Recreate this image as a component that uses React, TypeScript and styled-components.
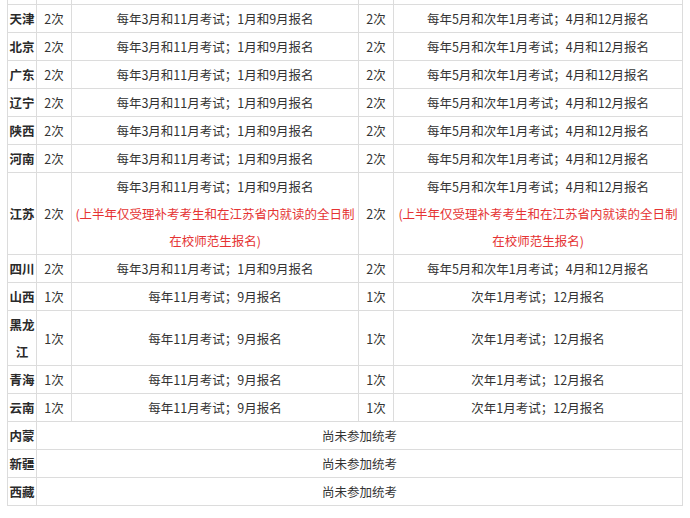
import styled, { createGlobalStyle } from "styled-components";

const GlobalStyle = createGlobalStyle`
  html, body {
    margin: 0;
    padding: 0;
    background: #fff;
  }
  body {
    font-family: "Noto Sans CJK SC", "Microsoft YaHei", sans-serif;
  }
`;

const Page = styled.div`
  width: 690px;
  height: 518px;
  padding-left: 7px;
  box-sizing: border-box;
  overflow: hidden;
`;

const Table = styled.table`
  border-collapse: collapse;
  table-layout: fixed;
  width: 676px;
  margin-top: -24px;
  font-size: 12.5px;
  line-height: 27px;
  color: #333;
`;

const Cell = styled.td<{ $bold?: boolean }>`
  border: 1px solid #dcdcdc;
  padding: 0 1px;
  text-align: center;
  vertical-align: middle;
  font-weight: ${(p) => (p.$bold ? 700 : 400)};
  color: ${(p) => (p.$bold ? "#2a2a2a" : "#333")};
`;

const HeadCell = styled.td`
  border: 1px solid #dcdcdc;
  height: 27px;
  padding: 0;
`;

const Note = styled.span`
  color: #e53333;
`;

type Row = {
  name: string;
  count1?: string;
  first?: string;
  count2?: string;
  second?: string;
  note?: boolean;
};

const twice1 = "每年3月和11月考试；1月和9月报名";
const twice2 = "每年5月和次年1月考试；4月和12月报名";
const once1 = "每年11月考试；9月报名";
const once2 = "次年1月考试；12月报名";

const rows: Row[] = [
  ...["天津", "北京", "广东", "辽宁", "陕西", "河南"].map((name) => ({
    name,
    count1: "2次",
    first: twice1,
    count2: "2次",
    second: twice2,
  })),
  { name: "江苏", count1: "2次", first: twice1, count2: "2次", second: twice2, note: true },
  { name: "四川", count1: "2次", first: twice1, count2: "2次", second: twice2 },
  ...["山西", "黑龙江", "青海", "云南"].map((name) => ({
    name,
    count1: "1次",
    first: once1,
    count2: "1次",
    second: once2,
  })),
  { name: "内蒙" },
  { name: "新疆" },
  { name: "西藏" },
];

const NoteText = () => (
  <Note>
    (上半年仅受理补考考生和在江苏省内就读的全日制
    <br />
    在校师范生报名)
  </Note>
);

export default function App() {
  return (
    <Page>
      <GlobalStyle />
      <Table>
        <colgroup>
          <col style={{ width: 29 }} />
          <col style={{ width: 35 }} />
          <col style={{ width: 287 }} />
          <col style={{ width: 35 }} />
          <col style={{ width: 289 }} />
        </colgroup>
        <tbody>
          <tr>
            <HeadCell />
            <HeadCell />
            <HeadCell />
            <HeadCell />
            <HeadCell />
          </tr>
          {rows.map((r) =>
            r.first ? (
              <tr key={r.name}>
                <Cell $bold>{r.name}</Cell>
                <Cell>{r.count1}</Cell>
                <Cell>
                  {r.first}
                  {r.note && (
                    <>
                      <br />
                      <NoteText />
                    </>
                  )}
                </Cell>
                <Cell>{r.count2}</Cell>
                <Cell>
                  {r.second}
                  {r.note && (
                    <>
                      <br />
                      <NoteText />
                    </>
                  )}
                </Cell>
              </tr>
            ) : (
              <tr key={r.name}>
                <Cell $bold>{r.name}</Cell>
                <Cell colSpan={4}>尚未参加统考</Cell>
              </tr>
            )
          )}
        </tbody>
      </Table>
    </Page>
  );
}
